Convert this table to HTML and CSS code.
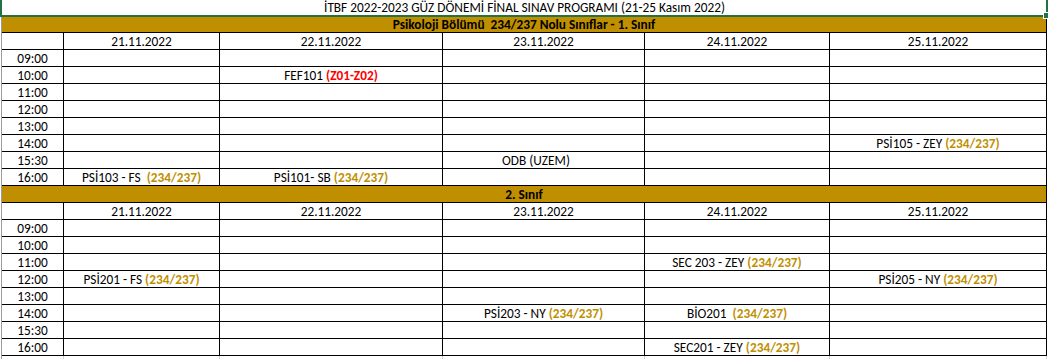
FILE: index.html
```html
<!DOCTYPE html>
<html lang="tr">
<head>
<meta charset="utf-8">
<title>İTBF Final Sınav Programı</title>
<link rel="stylesheet" href="styles.css">
</head>
<body>
<div class="sheet">
  <div class="grid">
    <div class="cell title span">İTBF 2022-2023 GÜZ DÖNEMİ FİNAL SINAV PROGRAMI (21-25 Kasım 2022)</div>

    <div class="cell band span">Psikoloji Bölümü  234/237 Nolu Sınıflar - 1. Sınıf</div>
    <div class="cell"></div>
    <div class="cell">21.11.2022</div>
    <div class="cell">22.11.2022</div>
    <div class="cell">23.11.2022</div>
    <div class="cell">24.11.2022</div>
    <div class="cell">25.11.2022</div>

    <div class="cell">09:00</div><div class="cell"></div><div class="cell"></div><div class="cell"></div><div class="cell"></div><div class="cell"></div>
    <div class="cell">10:00</div><div class="cell"></div><div class="cell">FEF101 <b class="red">(Z01-Z02)</b></div><div class="cell"></div><div class="cell"></div><div class="cell"></div>
    <div class="cell">11:00</div><div class="cell"></div><div class="cell"></div><div class="cell"></div><div class="cell"></div><div class="cell"></div>
    <div class="cell">12:00</div><div class="cell"></div><div class="cell"></div><div class="cell"></div><div class="cell"></div><div class="cell"></div>
    <div class="cell">13:00</div><div class="cell"></div><div class="cell"></div><div class="cell"></div><div class="cell"></div><div class="cell"></div>
    <div class="cell">14:00</div><div class="cell"></div><div class="cell"></div><div class="cell"></div><div class="cell"></div><div class="cell">PSİ105 - ZEY <b class="gold">(234/237)</b></div>
    <div class="cell">15:30</div><div class="cell"></div><div class="cell"></div><div class="cell">ODB (UZEM)     </div><div class="cell"></div><div class="cell"></div>
    <div class="cell">16:00</div><div class="cell">PSİ103 - FS  <b class="gold">(234/237)</b></div><div class="cell">PSİ101- SB <b class="gold">(234/237)</b></div><div class="cell"></div><div class="cell"></div><div class="cell"></div>

    <div class="cell band span">2. Sınıf</div>
    <div class="cell"></div>
    <div class="cell">21.11.2022</div>
    <div class="cell">22.11.2022</div>
    <div class="cell">23.11.2022</div>
    <div class="cell">24.11.2022</div>
    <div class="cell">25.11.2022</div>

    <div class="cell">09:00</div><div class="cell"></div><div class="cell"></div><div class="cell"></div><div class="cell"></div><div class="cell"></div>
    <div class="cell">10:00</div><div class="cell"></div><div class="cell"></div><div class="cell"></div><div class="cell"></div><div class="cell"></div>
    <div class="cell">11:00</div><div class="cell"></div><div class="cell"></div><div class="cell"></div><div class="cell">SEC 203 - ZEY <b class="gold">(234/237)</b></div><div class="cell"></div>
    <div class="cell">12:00</div><div class="cell">PSİ201 - FS <b class="gold">(234/237)</b></div><div class="cell"></div><div class="cell"></div><div class="cell"></div><div class="cell">PSİ205 - NY <b class="gold">(234/237)</b></div>
    <div class="cell">13:00</div><div class="cell"></div><div class="cell"></div><div class="cell"></div><div class="cell"></div><div class="cell"></div>
    <div class="cell">14:00</div><div class="cell"></div><div class="cell"></div><div class="cell">PSİ203 - NY <b class="gold">(234/237)</b></div><div class="cell">BİO201  <b class="gold">(234/237)</b></div><div class="cell"></div>
    <div class="cell">15:30</div><div class="cell"></div><div class="cell"></div><div class="cell"></div><div class="cell"></div><div class="cell"></div>
    <div class="cell">16:00</div><div class="cell"></div><div class="cell"></div><div class="cell"></div><div class="cell">SEC201 - ZEY <b class="gold">(234/237)</b></div><div class="cell"></div>

    <div class="cell ghost"></div><div class="cell ghost"></div><div class="cell ghost"></div><div class="cell ghost"></div><div class="cell ghost"></div><div class="cell ghost"></div>
  </div>
  <div class="selection"><span class="handle"></span></div>
</div>
</body>
</html>
```

FILE: styles.css
```css
html, body {
  margin: 0;
  padding: 0;
  background: #ffffff;
  overflow: hidden;
}

.sheet {
  position: relative;
  width: 1048px;
  height: 359px;
  overflow: hidden;
  font-family: Carlito, Calibri, Lato, "Liberation Sans", sans-serif;
  font-size: 13.3px;
  color: #000000;
}

.grid {
  display: grid;
  grid-template-columns: 62px 156px 223px 202px 185px 217px;
  grid-template-rows: 16px;
  grid-auto-rows: 17px;
  margin-left: 1px;
  border-left: 1px solid #9c9c9c;
  width: 1045px;
}

.cell {
  box-sizing: border-box;
  border-right: 1px solid #000000;
  border-bottom: 1px solid #000000;
  text-align: center;
  white-space: pre;
  line-height: 16px;
  padding-top: 1px;
  overflow: hidden;
}

.span {
  grid-column: 1 / -1;
}

.title {
  border: none;
  padding-top: 0;
  line-height: 15px;
}

.band {
  background: #bf8f00;
  font-weight: bold;
}

.gold {
  color: #bf8f00;
  font-weight: bold;
}

.red {
  color: #ff0000;
  font-weight: bold;
}

.ghost {
  border-right-color: #d4d4d4;
  border-bottom: none;
}

.selection {
  position: absolute;
  left: 0;
  top: -2px;
  width: 1048px;
  height: 19px;
  box-sizing: border-box;
  border: 2px solid #217346;
}

.handle {
  position: absolute;
  right: -4px;
  bottom: -4px;
  width: 5px;
  height: 5px;
  background: #217346;
  border: 1px solid #ffffff;
}
```
